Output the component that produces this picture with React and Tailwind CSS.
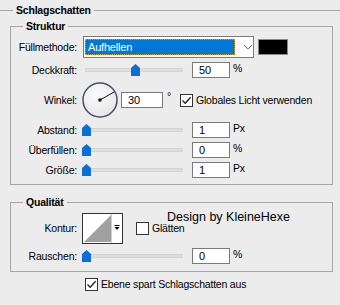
import React from "react";

const FONT = { fontFamily: '"Liberation Sans", Arial, sans-serif' };

function Thumb() {
  return (
    <svg width="9" height="12" viewBox="0 0 9 12" className="block">
      <polygon points="0,4 4.5,0 9,4 9,12 0,12" fill="#0a6fd4" />
    </svg>
  );
}

function Slider({ thumbLeft }) {
  return (
    <div className="relative w-[101px] h-[14px] flex items-center">
      <div className="ml-[3px] flex-1 h-[4px] bg-[#dedede] border border-[#d4d4d4] rounded-[1px]" />
      <div className="absolute top-[1px]" style={{ left: thumbLeft }}>
        <Thumb />
      </div>
    </div>
  );
}

function NumInput({ value, w = "w-[38px]", h = "h-[16px]" }) {
  return (
    <div className={`${w} ${h} bg-white border border-[#7a7a7a] flex items-center pl-[6px] text-[11px] tracking-normal leading-none`}>
      {value}
    </div>
  );
}

function Check({ checked }) {
  return (
    <div className="w-[13px] h-[13px] bg-white border border-[#333333] flex items-center justify-center shrink-0">
      {checked && (
        <svg width="11" height="11" viewBox="0 0 11 11" className="block">
          <path d="M1.5 5.5 L4.2 8.3 L9.6 2.2" fill="none" stroke="#222" strokeWidth="1.3" />
        </svg>
      )}
    </div>
  );
}

function Label({ children }) {
  return <div className="w-[66px] text-right shrink-0 leading-none">{children}</div>;
}

function SliderRow({ label, thumbLeft, value, unit, h = "h-[20px]", mt = "" }) {
  return (
    <div className={`flex items-center ${h} ${mt}`}>
      <Label>{label}</Label>
      <div className="ml-[5px]">
        <Slider thumbLeft={thumbLeft} />
      </div>
      <div className="ml-[9px]">
        <NumInput value={value} />
      </div>
      <div className="ml-[3px] -mt-[3px] leading-none">{unit}</div>
    </div>
  );
}

export default function App() {
  return (
    <div className="w-[340px] h-[305px] bg-[#ececec] text-[10.5px] tracking-[-0.2px] text-black overflow-hidden" style={FONT}>
      {/* heading */}
      <div className="flex items-center h-[20px]">
        <div className="w-[13px] h-px bg-[#a5a5a5]" />
        <span className="font-bold px-[3px] leading-none">Schlagschatten</span>
        <div className="flex-1 h-px bg-[#a5a5a5]" />
      </div>

      {/* Struktur */}
      <fieldset className="mx-[10px] w-[323px] border border-[#a5a5a5] pb-[4px]">
        <legend className="ml-[12px] px-[3px] font-bold leading-[12px] h-[12px]">Struktur</legend>

        <div className="flex items-center h-[22px] mt-[4px]">
          <Label>Füllmethode:</Label>
          <div className="ml-[6px] w-[171px] h-[22px] bg-white border border-[#7a7a7a] flex items-center pl-[1px]">
            <div className="w-[150px] h-[16px] bg-[#0078d7] border border-dotted border-[#e59a2a] text-white flex items-center pl-[2px] text-[11px] leading-none">
              Aufhellen
            </div>
            <svg width="10" height="6" viewBox="0 0 10 6" className="ml-[8px] block">
              <path d="M1 1 L5 5 L9 1" fill="none" stroke="#666" strokeWidth="1" />
            </svg>
          </div>
          <div className="ml-[4px] w-[30px] h-[16px] bg-black border border-[#8a8a8a]" />
        </div>

        <SliderRow label="Deckkraft:" thumbLeft={49} value="50" unit="%" h="h-[18px]" mt="mt-[3px]" />

        <div className="flex items-center h-[38px] mt-[2px]">
          <Label>Winkel:</Label>
          <svg width="36" height="36" viewBox="0 0 36 36" className="ml-[5px] block shrink-0">
            <defs>
              <radialGradient id="dialg" cx="40%" cy="35%" r="70%">
                <stop offset="0%" stopColor="#fbfbfb" />
                <stop offset="100%" stopColor="#e6e6e6" />
              </radialGradient>
            </defs>
            <circle cx="18" cy="18" r="17" fill="url(#dialg)" stroke="#45506e" strokeWidth="1.5" />
            <line x1="18" y1="18" x2="32" y2="10" stroke="#111" strokeWidth="1" />
            <rect x="16.5" y="16.5" width="3" height="3" fill="#000" />
          </svg>
          <div className="ml-[3px]">
            <NumInput value="30" w="w-[42px]" />
          </div>
          <div className="ml-[4px] -mt-[8px] leading-none">°</div>
          <div className="ml-[9px] flex items-center">
            <Check checked />
            <span className="ml-[3px] leading-none">Globales Licht verwenden</span>
          </div>
        </div>

        <SliderRow label="Abstand:" thumbLeft={0} value="1" unit="Px" mt="mt-[1px]" />
        <SliderRow label="Überfüllen:" thumbLeft={0} value="0" unit="%" />
        <SliderRow label="Größe:" thumbLeft={0} value="1" unit="Px" />
      </fieldset>

      {/* Qualität */}
      <fieldset className="relative mx-[10px] mt-[11px] w-[323px] border border-[#a5a5a5] pb-[6px]">
        <legend className="ml-[12px] px-[3px] font-bold leading-[12px] h-[12px]">Qualität</legend>

        <div className="absolute left-[156px] top-[3px] text-[12.5px] tracking-normal leading-none whitespace-nowrap">
          Design by KleineHexe
        </div>

        <div className="flex items-center h-[31px] mt-[5px]">
          <Label>Kontur:</Label>
          <svg width="41" height="31" viewBox="0 0 41 31" className="ml-[5px] block shrink-0">
            <rect x="0.5" y="0.5" width="40" height="30" fill="#fff" stroke="#333" />
            <polygon points="2,29 29,2 29,29" fill="#a0a0a0" />
            <line x1="29.5" y1="1" x2="29.5" y2="30" stroke="#cfcfcf" />
            <polygon points="32.5,14 37.5,14 35,17" fill="#000" />
            <line x1="32.5" y1="12.5" x2="37.5" y2="12.5" stroke="#000" />
          </svg>
          <div className="ml-[13px] flex items-center">
            <Check />
            <span className="ml-[3px] leading-none">Glätten</span>
          </div>
        </div>

        <SliderRow label="Rauschen:" thumbLeft={0} value="0" unit="%" h="h-[18px]" mt="mt-[3px]" />
      </fieldset>

      <div className="flex items-center h-[13px] mt-[6px] pl-[85px]">
        <Check checked />
        <span className="ml-[3px] leading-none">Ebene spart Schlagschatten aus</span>
      </div>
    </div>
  );
}
